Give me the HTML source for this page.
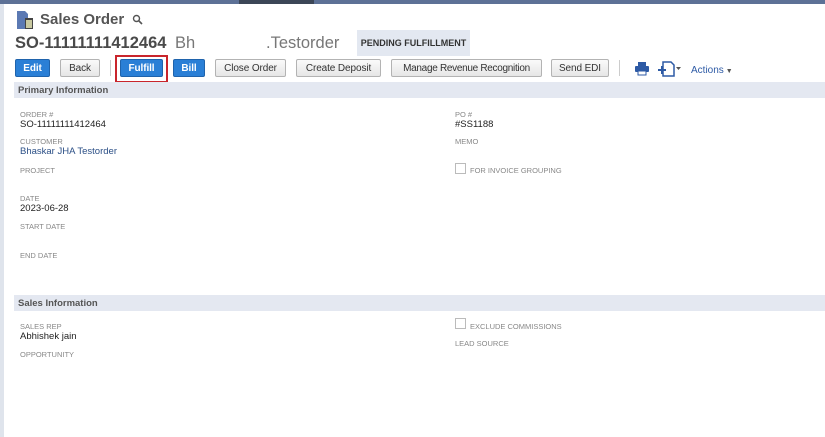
<!DOCTYPE html>
<html><head><style>
*{margin:0;padding:0;box-sizing:border-box}
body{width:825px;height:437px;background:#fff;font-family:"Liberation Sans",sans-serif;position:relative;overflow:hidden;color:#333}
.a{position:absolute}
.bar{left:0;top:0;width:825px;height:4px;background:#5d7196}
.bar2{left:239px;top:0;width:75px;height:4px;background:#3c4657}
.lb{left:0;top:4px;width:4px;height:433px;background:#dfe4ec}
.btn{position:absolute;top:59px;height:18px;border:1px solid #b3b3b3;background:linear-gradient(#fafafa,#e6e6e6);font-size:10px;letter-spacing:-0.1px;color:#333;display:flex;align-items:center;justify-content:center;border-radius:2px;white-space:nowrap;padding-top:1px}
.bb{background:#2a7fd6;border-color:#1f63ac;color:#fff;font-weight:bold}
.hd{left:14px;width:811px;height:16px;background:#e4e8f1;font-size:9.5px;font-weight:bold;color:#555;padding-left:4px;line-height:18px}
.lbl{font-size:7.5px;color:#888;position:absolute}
.val{font-size:9.5px;color:#222;position:absolute}
</style></head><body>
<div class="a bar"></div><div class="a bar2"></div><div class="a lb"></div>
<svg class="a" style="left:16px;top:10px" width="20" height="20" viewBox="0 0 20 20"><path d="M1 1h8l3 3v15H1z" fill="#5b79b3"/><rect x="9" y="8" width="8" height="11" fill="#444"/><rect x="10" y="10" width="6" height="8" fill="#c9c9a0"/></svg>
<div class="a" style="left:40px;top:11px;font-size:15px;font-weight:bold;color:#555">Sales Order</div>
<svg class="a" style="left:132px;top:14px" width="11" height="11" viewBox="0 0 11 11"><circle cx="4.5" cy="4.5" r="3" fill="none" stroke="#555" stroke-width="1.4"/><path d="M7 7l3 3" stroke="#555" stroke-width="1.6"/></svg>
<div class="a" style="left:15px;top:34px;font-size:16.5px;font-weight:bold;color:#4a4a4a">SO-11111111412464</div>
<div class="a" style="left:175px;top:34px;font-size:16.5px;color:#777">Bh</div>
<div class="a" style="left:266px;top:34px;font-size:16.5px;color:#777">.Testorder</div>
<div class="a" style="left:357px;top:30px;width:113px;height:26px;background:#e3e8f1;font-size:9px;font-weight:bold;color:#333;line-height:26px;text-align:center">PENDING FULFILLMENT</div>
<div class="btn bb" style="left:15px;width:35px">Edit</div>
<div class="btn" style="left:60px;width:40px">Back</div>
<div class="a" style="left:110px;top:60px;width:1px;height:16px;background:#ccc"></div>
<div class="a" style="left:115px;top:55px;width:53px;height:28px;border:2px solid #c9252c"></div>
<div class="btn bb" style="left:120px;width:43px">Fulfill</div>
<div class="btn bb" style="left:173px;width:32px">Bill</div>
<div class="btn" style="left:215px;width:71px">Close Order</div>
<div class="btn" style="left:296px;width:85px">Create Deposit</div>
<div class="btn" style="left:391px;width:151px;letter-spacing:-0.3px">Manage Revenue Recognition</div>
<div class="btn" style="left:551px;width:58px">Send EDI</div>
<div class="a" style="left:619px;top:60px;width:1px;height:16px;background:#ccc"></div>
<svg class="a" style="left:634px;top:62px" width="16" height="14" viewBox="0 0 16 14"><rect x="4" y="0" width="8" height="4" fill="#2d5aa5"/><rect x="1" y="4" width="14" height="6" rx="1" fill="#2d5aa5"/><rect x="4" y="9" width="8" height="4" fill="#fff" stroke="#2d5aa5"/></svg>
<svg class="a" style="left:657px;top:60px" width="26" height="18" viewBox="0 0 26 18"><path d="M6 2h8l3 3v11H6z" fill="none" stroke="#2d5aa5" stroke-width="1.5"/><path d="M1 10h8M5 6v8" stroke="#2d5aa5" stroke-width="2"/><path d="M19 7h5l-2.5 3z" fill="#555"/></svg>
<div class="a" style="left:691px;top:65px;font-size:10px;color:#2d5aa5">Actions<span style="font-size:7px;color:#555"> ▼</span></div>
<div class="a hd" style="top:82px">Primary Information</div>
<div class="lbl" style="left:20px;top:110px">ORDER #</div>
<div class="val" style="left:20px;top:119px">SO-11111111412464</div>
<div class="lbl" style="left:20px;top:137px">CUSTOMER</div>
<div class="val" style="left:20px;top:146px;color:#2b4f86">Bhaskar JHA Testorder</div>
<div class="lbl" style="left:20px;top:166px">PROJECT</div>
<div class="lbl" style="left:20px;top:194px">DATE</div>
<div class="val" style="left:20px;top:203px">2023-06-28</div>
<div class="lbl" style="left:20px;top:222px">START DATE</div>
<div class="lbl" style="left:20px;top:251px">END DATE</div>
<div class="lbl" style="left:455px;top:110px">PO #</div>
<div class="val" style="left:455px;top:119px">#SS1188</div>
<div class="lbl" style="left:455px;top:137px">MEMO</div>
<div class="a" style="left:455px;top:163px;width:11px;height:11px;border:1px solid #bbb"></div>
<div class="lbl" style="left:470px;top:166px">FOR INVOICE GROUPING</div>
<div class="a hd" style="top:295px">Sales Information</div>
<div class="lbl" style="left:20px;top:322px">SALES REP</div>
<div class="val" style="left:20px;top:331px">Abhishek jain</div>
<div class="lbl" style="left:20px;top:350px">OPPORTUNITY</div>
<div class="a" style="left:455px;top:318px;width:11px;height:11px;border:1px solid #bbb"></div>
<div class="lbl" style="left:470px;top:322px">EXCLUDE COMMISSIONS</div>
<div class="lbl" style="left:455px;top:339px">LEAD SOURCE</div>
</body></html>
